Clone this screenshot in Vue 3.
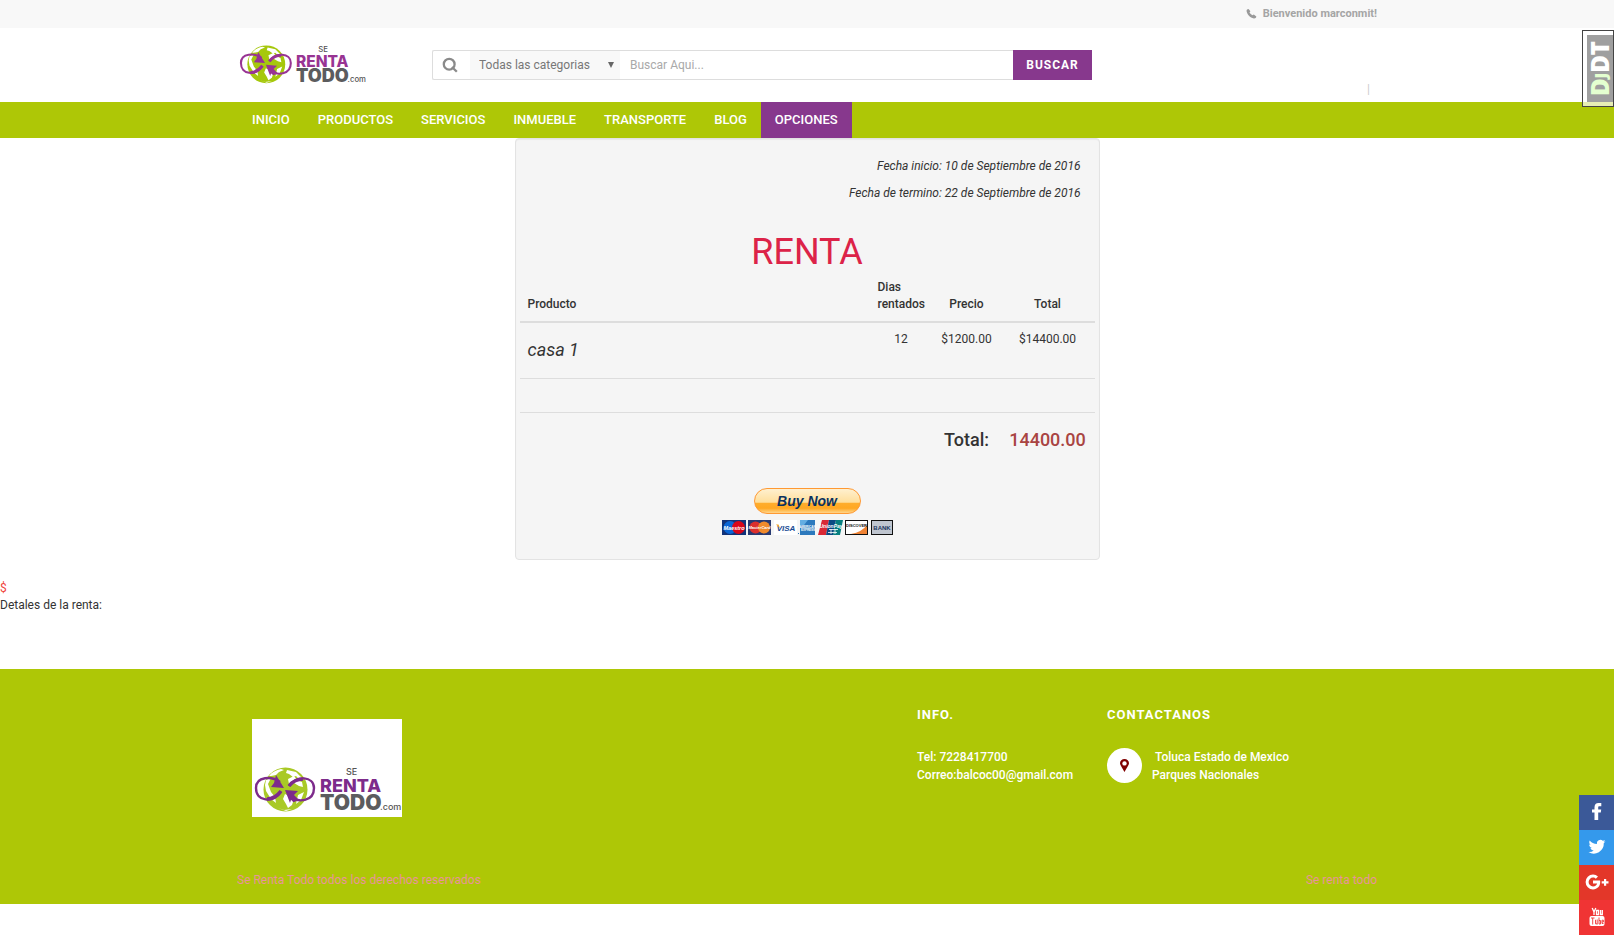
<script setup>
import { h, ref } from 'vue'

const search = ref('')
const category = ref('all')
const navItems = ['INICIO', 'PRODUCTOS', 'SERVICIOS', 'INMUEBLE', 'TRANSPORTE', 'BLOG', 'OPCIONES']
const active = 'OPCIONES'

const logoFont = 'Inter, "Open Sans", sans-serif'
const word = (x, y, size, weight, fill, text) =>
  h('text', { x, y, fill, 'font-size': size, 'font-weight': weight, 'font-family': logoFont }, text)

const BrandLogo = (props) =>
  h('svg', { viewBox: '0 0 150 50', role: 'img', 'aria-label': 'Se Renta Todo' }, [
    h('circle', { cx: 33.5, cy: 22.5, r: 22, fill: props.green }),
    h('path', {
      fill: '#fff',
      d: 'M17 9c3-4 7-6 12-7l3 1-5 2-3 3-5 1zM35 3l9 2 6 6-3 1-3-3-3 1-4-3-3-1zM14 13l5-2-3 6 3 8 4 5 1 6-5-4-5-8-1-6zM36 12l6-3 3 4 5 2 1 5-4-1-5-3-5 1zM33 27l4 2 5 3-2 6-4 3-2-4-3-5zM46 28l6-3-3 8-5 4zM26 41l6 2 8-1-6 2z',
    }),
    h('g', { fill: 'none', stroke: props.purple, 'stroke-width': 2.4 }, [
      h('path', { d: 'M28 15C20 9 4 9 4 21c0 14 17 15 25 4' }),
      h('path', { d: 'M37 19c7-11 25-10 25 2 0 14-16 15-25 8' }),
    ]),
    h('g', { fill: 'none', stroke: props.purple, 'stroke-width': 3.6 }, [
      h('path', { d: 'M15 32c6 0 10-3 14-8' }),
      h('path', { d: 'M37 19c4-5 8-7 14-7' }),
    ]),
    h('path', { fill: props.purple, d: 'M24 8l8 13-13-1 3-4zM33 23l13 1-4 4 5 5-5 2-1 0z' }),
    h('path', { fill: props.purple, d: 'M33 23l10 12-4-2-1 3z' }),
    word(94, 8, 9, 500, '#555', 'SE'),
    word(68, 25, 18, 800, props.purple, 'RENTA'),
    word(68, 43, 21, 900, '#5c5c5e', 'TODO'),
    word(128, 43, 9, 500, '#555', '.com'),
  ])
BrandLogo.props = ['green', 'purple']
</script>

<template>
  <div class="page">
    <div class="topbar">
      <div class="container topbar-in">
        <svg class="phone" viewBox="0 0 12 12" aria-hidden="true">
          <path d="M2.8 1L4.8 3.6 3.8 5C4.5 6.2 5.600 7.300 7 8L8.500 7 11.300 9.200C11.200 10.500 10 11.600 8.600 11.400 4.400 10.600 1.200 7.400.600 3.400.500 2 1.500 1 2.800 1z" />
        </svg>
        <strong>Bienvenido marconmit!</strong>
      </div>
    </div>

    <header class="container header">
      <a href="#" class="brand"><BrandLogo green="#a6c80c" purple="#983493" /></a>
      <form class="search" @submit.prevent>
        <span class="search-icon">
          <svg viewBox="0 0 14 14" aria-hidden="true">
            <circle cx="6.2" cy="6.2" r="5.4" /><path d="M9 9l4.800 4.800" />
          </svg>
        </span>
        <span class="select-wrap">
          <select v-model="category" aria-label="Categoria">
            <option value="all">Todas las categorias</option>
          </select>
          <span class="arrow" aria-hidden="true"></span>
        </span>
        <input v-model="search" type="text" placeholder="Buscar Aqui..." aria-label="Buscar" />
        <button type="submit">BUSCAR</button>
      </form>
      <span class="divider">|</span>
    </header>

    <nav class="nav">
      <div class="container nav-in">
        <a v-for="item in navItems" :key="item" href="#" :class="{ active: item === active }">{{ item }}</a>
      </div>
    </nav>

    <main>
      <section class="well">
        <div class="dates">
          <p><em>Fecha inicio: 10 de Septiembre de 2016</em></p>
          <p><em>Fecha de termino: 22 de Septiembre de 2016</em></p>
        </div>
        <h1>RENTA</h1>
        <table>
          <colgroup>
            <col /><col class="c-days" /><col class="c-price" /><col class="c-total" />
          </colgroup>
          <thead>
            <tr><th class="left">Producto</th><th class="left">Dias rentados</th><th>Precio</th><th>Total</th></tr>
          </thead>
          <tbody>
            <tr>
              <td class="left"><h4><em>casa 1</em></h4></td>
              <td>12</td><td>$1200.00</td><td>$14400.00</td>
            </tr>
            <tr><td>&nbsp;</td><td></td><td></td><td></td></tr>
            <tr>
              <td></td><td></td>
              <td><h4><strong>Total:</strong></h4></td>
              <td class="amount"><h4><strong>14400.00</strong></h4></td>
            </tr>
          </tbody>
        </table>
        <form class="pay" @submit.prevent>
          <button type="submit" class="buy">Buy Now</button>
          <svg class="cards" viewBox="0 0 171 15" role="img" aria-label="Tarjetas aceptadas">
            <g class="mark">
              <rect width="24" height="15" fill="#12337a" />
              <circle cx="8" cy="7.5" r="6.5" fill="#0a66d6" />
              <circle cx="16.5" cy="7.5" r="6.5" fill="#d8061a" />
              <text x="12" y="9.5" font-size="5.5" fill="#fff">Maestro</text>
              <rect x="26" width="23" height="15" fill="#283a72" />
              <circle cx="33.5" cy="7.5" r="6" fill="#dc2f2d" />
              <circle cx="42" cy="7.5" r="6" fill="#f08a2c" />
              <text x="37.5" y="9" font-size="4" fill="#fff">MasterCard</text>
              <rect x="52" width="23" height="15" fill="#fff" />
              <text x="64" y="10.5" font-size="8" fill="#174a94">VISA</text>
              <path d="M54 4.5h2.5l1.500 4z" fill="#f0a020" />
              <rect x="78" width="15" height="15" fill="#2c79bd" />
              <path d="M78 0h8l-4 5h-4z" fill="#64aee2" />
              <path d="M76 13h1v1h-1z" fill="#2c79bd" />
              <text class="up" x="85.5" y="7.5" font-size="3" fill="#fff">AMERICAN</text>
              <text class="up" x="86" y="11" font-size="3" fill="#fff">EXPRESS</text>
              <path d="M100 0h7l-3 15h-8z" fill="#d92835" />
              <path d="M107 0h7l-3 15h-7z" fill="#0b4a83" />
              <path d="M114 0h7l-3 15h-7z" fill="#087f80" />
              <text x="109" y="8" font-size="5" fill="#fff">UnionPay</text>
              <path d="M107 9.5h9M106 12.5h9M109 9v5M113 9v5" stroke="#fff" stroke-width=".8" />
              <rect x="123.5" y=".5" width="22" height="14" fill="#fff" stroke="#111" />
              <path d="M145 5v9h-16q11-2 16-9z" fill="#f08334" />
              <text class="up" x="134.5" y="7" font-size="4" fill="#111">DISCOVER</text>
              <rect x="149.5" y=".5" width="21" height="14" fill="#bfc5cf" stroke="#111" />
              <text class="up" x="160" y="9.5" font-size="6" fill="#20365e">BANK</text>
            </g>
          </svg>
        </form>
      </section>
      <div class="currency">$</div>
      <div>Detales de la renta:</div>
    </main>

    <footer>
      <div class="container foot-top">
        <div class="foot-logo"><BrandLogo green="#a9c926" purple="#7d2b8b" /></div>
        <section class="info">
          <h3>INFO.</h3>
          <p>Tel: 7228417700<br />Correo:balcoc00@gmail.com</p>
        </section>
        <section class="contact">
          <h3>CONTACTANOS</h3>
          <div class="place">
            <span class="pin">
              <svg viewBox="0 0 9 13" aria-hidden="true">
                <path fill-rule="evenodd" d="M4.5 0C7 0 9 1.800 9 4.300 9 6 5.800 10.600 4.500 13 3.200 10.600 0 6 0 4.300 0 1.800 2 0 4.500 0zm0 2.200a2.200 2.200 0 100 4.400 2.200 2.200 0 000-4.400z" />
              </svg>
            </span>
            <p>&nbsp;Toluca Estado de Mexico<br />Parques Nacionales</p>
          </div>
        </section>
      </div>
      <div class="container foot-bottom">
        <span>Se Renta Todo todos los derechos reservados</span>
        <span>Se renta todo</span>
      </div>
    </footer>

    <a href="#" class="debug" aria-label="Mostrar barra">
      <span class="debug-in"><span class="debug-text"><b>D<small>J</small></b>DT</span></span>
    </a>

    <div class="social">
      <a href="#" class="fb" aria-label="Facebook">
        <svg viewBox="0 0 20 20"><path d="M7.500 18v-7.500H5V7.500h2.500V5.200C7.500 2.500 9 1 11.500 1h2.800v3.200h-1.800c-1 0-1.300.5-1.300 1.300v2h3l-.4 3h-2.600V18z" /></svg>
      </a>
      <a href="#" class="tw" aria-label="Twitter">
        <svg viewBox="0 0 20 20"><path d="M18.500 4.300c-.6.300-1.300.5-2 .6.700-.4 1.200-1.100 1.500-1.900-.7.400-1.400.7-2.200.8A3.500 3.500 0 009.900 7C7 6.900 4.400 5.500 2.700 3.400c-.9 1.600-.4 3.600 1.100 4.600-.6 0-1.100-.2-1.600-.4 0 1.700 1.200 3.100 2.800 3.400-.5.100-1 .2-1.600.1.500 1.400 1.700 2.400 3.300 2.400A7 7 0 011.500 15 10 10 0 0016.800 6.100c.7-.5 1.300-1.100 1.700-1.800z" /></svg>
      </a>
      <a href="#" class="gp" aria-label="Google Plus">
        <svg class="wide" viewBox="0 0 24 20"><path d="M8 8.500v3h4.200c-.4 1.500-1.800 2.900-4.200 2.900A4.400 4.400 0 018 5.600c1.200 0 2.100.5 2.800 1.100L13 4.500A7.300 7.300 0 008 2.600a7.400 7.400 0 100 14.800c4.300 0 7.200-3 7.200-7.300 0-.6 0-1.100-.1-1.600zM19 7v2.200h-2.300v2.200H19v2.300h2.200v-2.300h2.300V9.200h-2.300V7z" /></svg>
      </a>
      <a href="#" class="yt" aria-label="YouTube">
        <svg viewBox="0 0 20 20">
          <path d="M5.200 1l1.800 4v3M8.800 1L7 5M10 3.500h1.500v4H9.500v-4zM13.500 3v4.500h1.800V3M15.300 3v5" class="line" />
          <rect x="2.500" y="9" width="15" height="10" rx="2" />
          <path d="M4 11h3.500M5.700 11v6.500M8.500 12.800v4h1.700M10.200 12.500v5M12 10.500v6.500h1.500v-3.500H12M16.500 16.500H15v-3.300h1.400V15H15" class="cut" />
        </svg>
      </a>
    </div>
  </div>
</template>

<style>
body {
  margin: 0;
  background: #fff;
}
</style>

<style scoped>
.page {
  font: 12px/17px Roboto, "Liberation Sans", sans-serif;
  color: #333;
}
.page * {
  box-sizing: border-box;
}
a {
  color: inherit;
  text-decoration: none;
}
p,
h1,
h3,
h4 {
  margin: 0;
}
.container {
  max-width: 1140px;
  margin: 0 auto;
}
.topbar {
  background: #f8f8f8;
}
.topbar-in {
  display: flex;
  align-items: center;
  justify-content: flex-end;
  gap: 6px;
  height: 28px;
  padding-bottom: 2px;
  font-size: 11px;
  color: #a5a5a5;
}
.phone {
  width: 11px;
  height: 11px;
  fill: #999;
}
.header {
  display: flex;
  align-items: center;
  height: 74px;
}
.brand {
  flex: 0 0 195px;
}
.brand svg {
  display: block;
  width: 130px;
  height: 43px;
  margin-top: 3px;
}
.search {
  display: flex;
  flex: 0 1 660px;
  height: 30px;
  border: 1px solid #ddd;
  border-right: 0;
  border-radius: 2px;
}
.search-icon {
  display: flex;
  align-items: center;
  width: 37px;
  padding-left: 10px;
}
.search-icon svg {
  width: 14px;
  height: 14px;
  overflow: visible;
  fill: none;
  stroke: #8a8a8a;
  stroke-width: 2.3;
}
.select-wrap {
  position: relative;
  width: 150px;
  background: #f8f8f8;
}
.select-wrap select {
  width: 100%;
  height: 100%;
  padding: 0 9px;
  border: 0;
  background: transparent;
  appearance: none;
  font: inherit;
  color: #777;
}
.arrow {
  position: absolute;
  right: 6px;
  top: 11px;
  border: 3px solid transparent;
  border-top: 6px solid #666;
  border-bottom: 0;
  pointer-events: none;
}
.search input {
  flex: 1;
  min-width: 0;
  padding: 0 10px;
  border: 0;
  background: transparent;
  font: inherit;
  color: #555;
}
.search input::placeholder {
  color: #a9a9a9;
}
.search button {
  width: 79px;
  margin: -1px 0;
  padding: 0;
  border: 0;
  background: #87388d;
  color: #fff;
  font: bold 12px/17px Roboto, sans-serif;
  letter-spacing: 1px;
}
.divider {
  align-self: flex-end;
  margin: 0 7px 4px auto;
  color: #ccc;
}
.nav {
  background: #aec706;
}
.nav-in {
  display: flex;
  padding-left: 1px;
}
.nav a {
  padding: 0 14px;
  font-size: 13px;
  font-weight: 500;
  line-height: 36px;
  color: #fff;
}
.nav a.active {
  background: #87388d;
}
.well {
  max-width: 585px;
  margin: 0 auto 20px;
  padding: 19px 4px;
  border: 1px solid #e3e3e3;
  border-radius: 4px;
  background: #f5f5f5;
  box-shadow: inset 0 1px 1px rgba(0, 0, 0, 0.05);
}
.dates {
  padding-right: 14px;
  text-align: right;
}
.dates p {
  margin-bottom: 10px;
}
h1 {
  padding-top: 2px;
  font-size: 36px;
  font-weight: 400;
  line-height: 38px;
  text-align: center;
  color: #dc2348;
}
.dates + h1 {
  margin-top: 29px;
}
table {
  width: 100%;
  table-layout: fixed;
  border-collapse: separate;
  border-spacing: 0;
  text-align: center;
}
.c-days {
  width: 63px;
}
.c-price {
  width: 68px;
}
.c-total {
  width: 94px;
}
th {
  padding: 8px;
  border-bottom: 2px solid #ddd;
  font-weight: 500;
  vertical-align: bottom;
}
td {
  padding: 8px;
  vertical-align: top;
}
tbody tr + tr td {
  border-top: 1px solid #ddd;
}
.left {
  text-align: left;
}
h4 {
  margin: 9px 0 11px;
  font-size: 18px;
  font-weight: 400;
  line-height: 19px;
}
h4 strong {
  font-weight: 500;
}
.amount {
  color: #a94442;
}
.pay {
  display: flex;
  flex-direction: column;
  align-items: center;
  gap: 6px;
  padding: 20px 0 5px;
}
.buy {
  width: 107px;
  height: 26px;
  padding: 0;
  border: 1px solid #ff9933;
  border-radius: 13px;
  background: linear-gradient(#fff0cf, #ffdf9c 55%, #ffad2c 60%, #ffa822 80%, #ffd58c);
  color: #0a3260;
  font: italic bold 14px/20px "Liberation Sans", sans-serif;
}
.cards {
  width: 171px;
  height: 15px;
}
.mark text {
  font-family: "Liberation Sans", sans-serif;
  font-weight: bold;
  font-style: italic;
  text-anchor: middle;
}
.mark .up {
  font-style: normal;
}
.currency {
  color: #f0453c;
}
footer {
  margin-top: 55px;
  background: #aec706;
  color: #fff;
}
.foot-top {
  display: flex;
  height: 203px;
  padding: 37px 0 0 15px;
}
.foot-logo {
  width: 150px;
  height: 98px;
  margin: 13px auto 0 0;
  padding-top: 48px;
  background: #fff;
}
.foot-logo svg {
  display: block;
}
footer h3 {
  margin-bottom: 24px;
  font-size: 13px;
  font-weight: bold;
  line-height: 18px;
  letter-spacing: 1px;
}
footer p {
  font-weight: 500;
  line-height: 18px;
}
.info {
  width: 190px;
}
.contact {
  width: 270px;
}
.place {
  display: flex;
  gap: 10px;
}
.pin {
  display: flex;
  align-items: center;
  justify-content: center;
  width: 35px;
  height: 35px;
  border-radius: 50%;
  background: #fff;
}
.pin svg {
  width: 9px;
  height: 13px;
  fill: #800000;
}
.foot-bottom {
  display: flex;
  justify-content: space-between;
  height: 32px;
  color: #e8949a;
}
.debug {
  position: absolute;
  top: 30px;
  right: 0;
  width: 32px;
  height: 77px;
  padding: 4px 0 4px 4px;
  border: 1px solid #444;
  background: rgba(255, 255, 255, 0.7);
}
.debug-in {
  display: flex;
  align-items: center;
  justify-content: center;
  height: 67px;
  background: #9f9f9f;
}
.debug-text {
  writing-mode: vertical-rl;
  transform: rotate(180deg);
  font: 800 24px/26px "Open Sans", sans-serif;
  color: #fff;
}
.debug-text b {
  font-weight: 800;
  color: #e4ffd0;
}
.debug-text small {
  font-size: 16px;
}
.social {
  position: fixed;
  right: 0;
  bottom: 0;
  width: 35px;
}
.social a {
  display: flex;
  align-items: center;
  justify-content: center;
  height: 35px;
  padding-bottom: 2px;
}
.social svg {
  width: 20px;
  height: 20px;
  fill: #fff;
}
.social .wide {
  width: 24px;
}
.social .line {
  fill: none;
  stroke: #fff;
  stroke-width: 1.3;
}
.social .cut {
  fill: none;
  stroke: #f03434;
  stroke-width: 0.9;
}
.fb {
  background: #3b5998;
}
.tw {
  background: #3499ec;
}
.gp {
  background: #e33729;
}
.yt {
  background: #f03434;
}
</style>
